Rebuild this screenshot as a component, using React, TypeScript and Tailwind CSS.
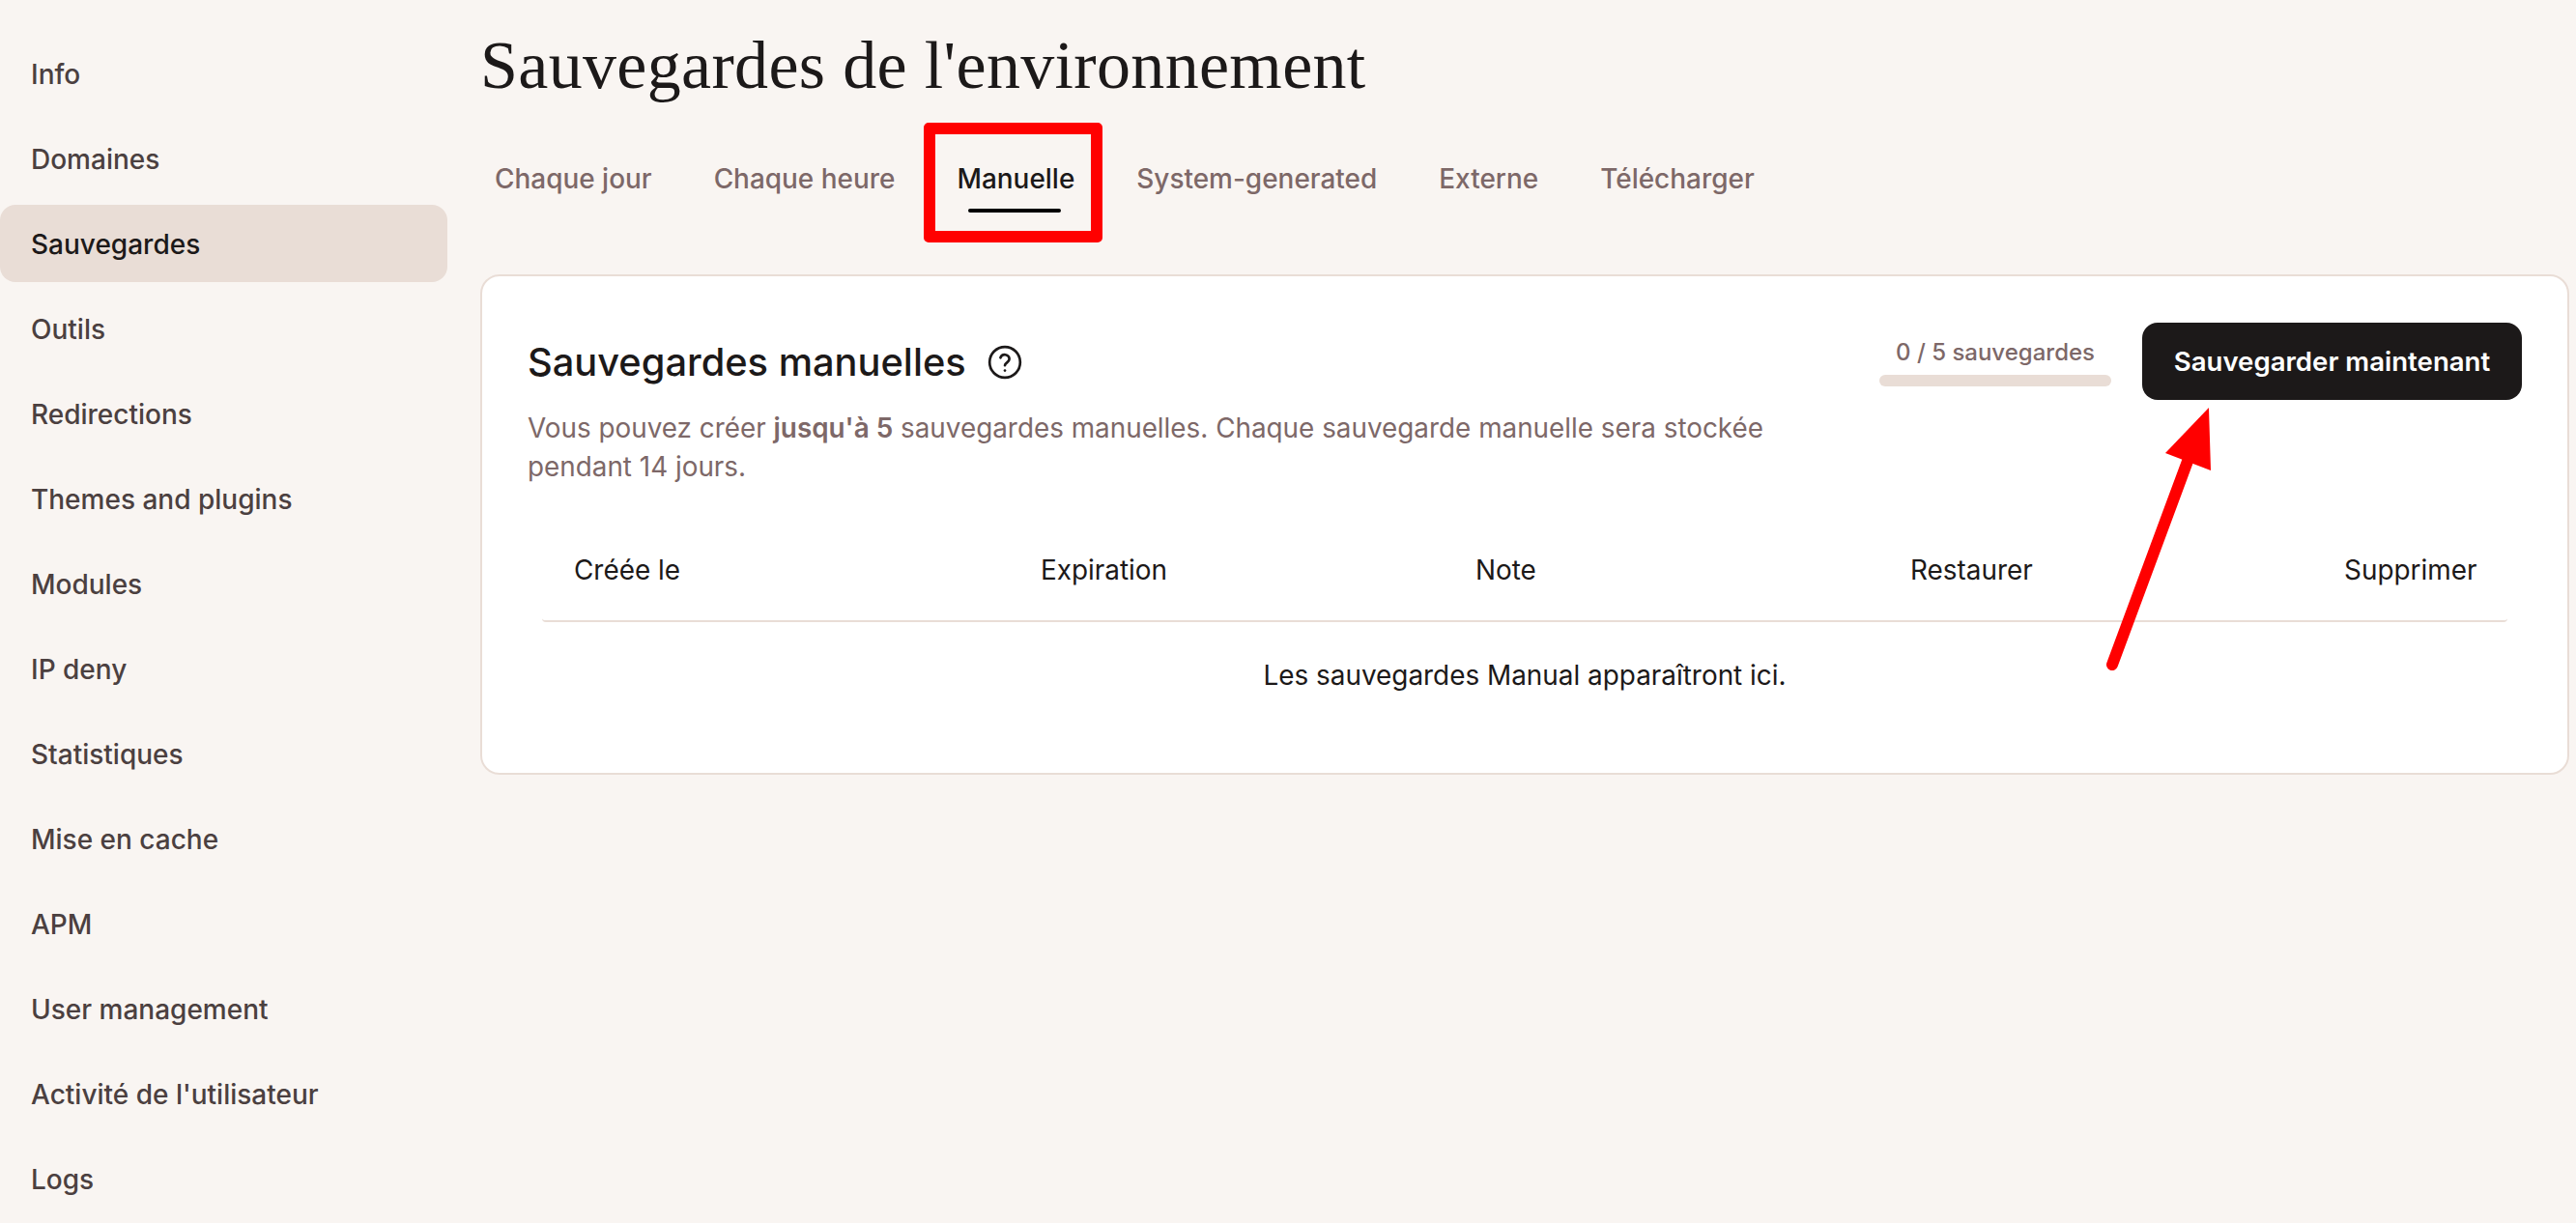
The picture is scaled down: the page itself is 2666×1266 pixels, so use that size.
import React from "react";

const nav = ["Info","Domaines","Sauvegardes","Outils","Redirections","Themes and plugins","Modules","IP deny","Statistiques","Mise en cache","APM","User management","Activité de l'utilisateur","Logs"];
const tabs = ["Chaque jour","Chaque heure","Manuelle","System-generated","Externe","Télécharger"];
const heads = ["Créée le","Expiration","Note","Restaurer","Supprimer"];

export default function App() {
  return (
    <div className="relative flex h-[1266px] w-[2666px] overflow-hidden bg-[#f9f5f2] font-['Inter',sans-serif] text-[#1c1919]">
      <aside className="flex w-[463px] shrink-0 flex-col gap-2 pt-[36px]">
        {nav.map((n) => (
          <div key={n} className={n === "Sauvegardes" ? "flex h-[80px] shrink-0 items-center rounded-2xl bg-[#e9ddd6] pl-8 pt-[2px] text-[28px] font-medium text-[#1c1919]" : "flex h-[80px] shrink-0 items-center pl-8 pt-[2px] text-[28px] font-medium text-[#4b4040]"}>
            {n}
          </div>
        ))}
      </aside>

      <main className="ml-[34px] mr-[7px] flex min-w-0 flex-1 flex-col">
        <h1 className="mt-[22px] h-[92px] font-['Liberation_Serif',serif] text-[70px] leading-[92px] tracking-[0.33px] text-[#1c1919]">
          Sauvegardes de l'environnement
        </h1>
        <nav className="ml-[15px] mt-[40px] flex gap-[64px]">
          {tabs.map((t) => (
            <div key={t} className={t === "Manuelle" ? "relative h-[60px] text-[27.95px] font-medium leading-[62px] text-[#1c1919]" : "h-[60px] text-[27.95px] font-medium leading-[62px] text-[#7d6868]"}>
              {t}
              {t === "Manuelle" && <span className="absolute bottom-[-6px] left-[12px] right-[14px] h-1 rounded-full bg-black" />}
            </div>
          ))}
        </nav>

        <section className="mt-[70px] h-[518px] rounded-[20px] border-2 border-[#e9ddd6] bg-white pl-[47px] pr-[47px] pt-[48px]">
          <div className="flex items-start justify-between">
            <div className="w-[1300px]">
              <div className="flex h-[82px] items-center gap-[21px]">
                <h2 className="text-[39.8px] font-medium leading-[48px] text-[#1c1919]">Sauvegardes manuelles</h2>
                <svg width="38" height="38" viewBox="0 0 24 24" fill="none" stroke="#1c1919" strokeWidth="1.7" strokeLinecap="round" strokeLinejoin="round">
                  <circle cx="12" cy="12" r="10" />
                  <path d="M9.1 9a3 3 0 0 1 5.8 1c0 2-2.9 2.4-2.9 4" />
                  <path d="M12 17.4h.01" />
                </svg>
              </div>
              <p className="mt-[7px] text-[27.85px] leading-[40px] text-[#7d6868]">
                Vous pouvez créer <strong className="font-semibold">jusqu'à 5</strong> sauvegardes manuelles. Chaque sauvegarde manuelle sera stockée pendant 14 jours.
              </p>
            </div>
            <div className="flex items-start gap-[32px]">
              <div className="flex w-[240px] flex-col items-center pt-[14px]">
                <span className="text-[24px] font-medium leading-[34px] text-[#7d6868]">0 / 5 sauvegardes</span>
                <span className="mt-[6px] h-3 w-[240px] rounded-full bg-[#e9ddd6]" />
              </div>
              <button className="h-[80px] w-[393px] rounded-2xl bg-[#1c1919] pt-[2px] text-[27.6px] font-semibold text-white">Sauvegarder maintenant</button>
            </div>
          </div>

          <div className="ml-[15px] mr-[15px] mt-[33px]">
            <div className="grid h-[108px] grid-cols-[483px_450px_450px_449px_1fr] items-center rounded-[4px] border-b-2 border-[#e9ddd6] pl-[33px] pt-[3px] text-[27.9px]">
              {heads.map((h) => <div key={h}>{h}</div>)}
            </div>
            <p className="mt-[35px] text-center text-[27.9px] leading-[40px]">Les sauvegardes Manual apparaîtront ici.</p>
          </div>
        </section>
      </main>

      <div className="absolute left-[956px] top-[127px] h-[124px] w-[185px] rounded-[5px] border-[12px] border-[#ff0000]" />
      <svg className="absolute left-0 top-0" width="2666" height="1266" fill="none">
        <path d="M2186 688 L2266 472" stroke="#ff0000" strokeWidth="12" strokeLinecap="round" />
        <path d="M2286 422 L2241 469 L2288 487 Z" fill="#ff0000" />
      </svg>
    </div>
  );
}
